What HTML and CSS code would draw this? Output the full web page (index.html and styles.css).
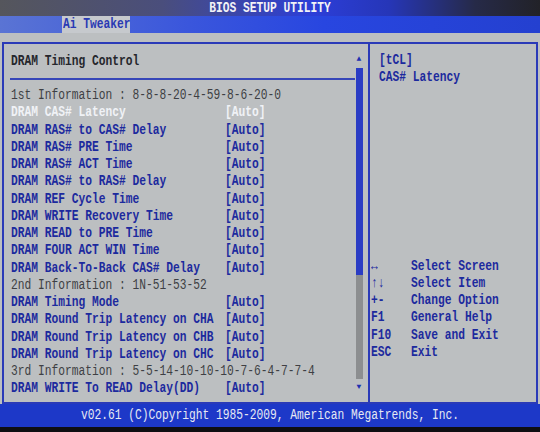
FILE: index.html
```html
<!DOCTYPE html>
<html lang="en">
<head>
    <meta charset="UTF-8">
    <title>BIOS Setup Utility</title>
    <link rel="stylesheet" href="styles.css">
</head>
<body>

    <div class="titlebar"><span class="txt">BIOS SETUP UTILITY</span></div>

    <div class="tabs">
        <div class="tab"><span class="txt">Ai Tweaker</span></div>
    </div>

    <div class="main">
        <div class="frame">
            <div class="left">
                <div class="content">
                    <div class="heading"><span class="txt">DRAM Timing Control</span></div>
                    <div class="rule"></div>

                    <div class="row info"><span class="txt">1st Information : 8-8-8-20-4-59-8-6-20-0</span></div>
                    <div class="row selected"><span class="txt label">DRAM CAS# Latency</span><span class="txt">[Auto]</span></div>
                    <div class="row"><span class="txt label">DRAM RAS# to CAS# Delay</span><span class="txt">[Auto]</span></div>
                    <div class="row"><span class="txt label">DRAM RAS# PRE Time</span><span class="txt">[Auto]</span></div>
                    <div class="row"><span class="txt label">DRAM RAS# ACT Time</span><span class="txt">[Auto]</span></div>
                    <div class="row"><span class="txt label">DRAM RAS# to RAS# Delay</span><span class="txt">[Auto]</span></div>
                    <div class="row"><span class="txt label">DRAM REF Cycle Time</span><span class="txt">[Auto]</span></div>
                    <div class="row"><span class="txt label">DRAM WRITE Recovery Time</span><span class="txt">[Auto]</span></div>
                    <div class="row"><span class="txt label">DRAM READ to PRE Time</span><span class="txt">[Auto]</span></div>
                    <div class="row"><span class="txt label">DRAM FOUR ACT WIN Time</span><span class="txt">[Auto]</span></div>
                    <div class="row"><span class="txt label">DRAM Back-To-Back CAS# Delay</span><span class="txt">[Auto]</span></div>
                    <div class="row info"><span class="txt">2nd Information : 1N-51-53-52</span></div>
                    <div class="row"><span class="txt label">DRAM Timing Mode</span><span class="txt">[Auto]</span></div>
                    <div class="row"><span class="txt label">DRAM Round Trip Latency on CHA</span><span class="txt">[Auto]</span></div>
                    <div class="row"><span class="txt label">DRAM Round Trip Latency on CHB</span><span class="txt">[Auto]</span></div>
                    <div class="row"><span class="txt label">DRAM Round Trip Latency on CHC</span><span class="txt">[Auto]</span></div>
                    <div class="row info"><span class="txt">3rd Information : 5-5-14-10-10-10-7-6-4-7-7-4</span></div>
                    <div class="row"><span class="txt label">DRAM WRITE To READ Delay(DD)</span><span class="txt">[Auto]</span></div>
                </div>

                <div class="scrollbar">
                    <div class="arrow">&#9650;</div>
                    <div class="thumb"></div>
                    <div class="track"></div>
                    <div class="arrow">&#9660;</div>
                </div>
            </div>

            <div class="right">
                <div class="help-top">
                    <div class="row"><span class="txt">[tCL]</span></div>
                    <div class="row"><span class="txt">CAS# Latency</span></div>
                </div>

                <div class="keys">
                    <div class="key"><span class="txt k">&#8596;</span><span class="txt">Select Screen</span></div>
                    <div class="key"><span class="txt k">&#8593;&#8595;</span><span class="txt">Select Item</span></div>
                    <div class="key"><span class="txt k">+-</span><span class="txt">Change Option</span></div>
                    <div class="key"><span class="txt k">F1</span><span class="txt">General Help</span></div>
                    <div class="key"><span class="txt k">F10</span><span class="txt">Save and Exit</span></div>
                    <div class="key"><span class="txt k">ESC</span><span class="txt">Exit</span></div>
                </div>
            </div>
        </div>
    </div>

    <div class="footer"><span class="txt">v02.61 (C)Copyright 1985-2009, American Megatrends, Inc.</span></div>

</body>
</html>
```

FILE: styles.css
```css
* {
    margin: 0;
    padding: 0;
    box-sizing: border-box;
}

body {
    width: 540px;
    height: 432px;
    overflow: hidden;
    background-color: #bcbfc1;
    color: #1c2a9e;
    font-family: "Liberation Mono", "DejaVu Sans Mono", monospace;
    font-weight: bold;
    font-size: 11.25px;
    line-height: 17.25px;
    white-space: nowrap;
}

/* bios font is taller than it is wide */
.txt {
    display: inline-block;
    transform: scaleY(1.25);
}

.titlebar {
    height: 16px;
    line-height: 16px;
    text-align: center;
    color: #f2f2f6;
    background: linear-gradient(90deg, #55565c 0%, #4a4e7c 30%, #2c3ed8 58%, #2636b8 72%, #262a48 88%, #222228 100%);
}

.tabs {
    height: 17px;
    padding-left: 62px;
    background: linear-gradient(90deg, #5a74d4 0%, #3a56dc 35%, #2846e0 60%, #2440d0 100%);
}

.tab {
    width: 68px;
    height: 17px;
    line-height: 17px;
    padding-left: 1px;
    background-color: #c6c9cd;
    color: #2a3ab4;
}

.main {
    height: 371px;
    padding: 9px 2px 0 2px;
}

.frame {
    height: 362px;
    border: 2px solid #2a3ab8;
    display: flex;
}

.left {
    width: 366px;
    display: flex;
    border-right: 2px solid #2a3ab8;
}

.content {
    flex: 1;
    padding: 9px 0 0 7px;
}

.heading {
    height: 17px;
    line-height: 17px;
    color: #25262c;
}

.rule {
    height: 2px;
    margin: 8px 0 7px -1px;
    background-color: #3646b8;
}

.row {
    display: flex;
    height: 17.25px;
}

.row .label {
    width: 214px;
}

.info {
    color: #3e3f44;
    font-weight: normal;
}

.selected {
    color: #f0f2f6;
}

.scrollbar {
    width: 8px;
    margin-right: 5px;
    padding-top: 11px;
    display: flex;
    flex-direction: column;
    align-items: center;
}

.arrow {
    font-size: 8px;
    line-height: 8px;
    height: 8px;
    color: #2030b0;
}

.thumb {
    width: 7px;
    height: 207px;
    margin-top: 5px;
    background-color: #2a3cc4;
}

.track {
    width: 7px;
    height: 104px;
    margin-bottom: 4px;
    background-color: #8c8e90;
}

.right {
    flex: 1;
    display: flex;
    flex-direction: column;
    padding-bottom: 41px;
}

.help-top {
    padding: 8px 0 0 9px;
}

.keys {
    margin-top: auto;
}

.key {
    display: flex;
    height: 17.25px;
}

.key .k {
    width: 41px;
    padding-left: 1px;
}

.footer {
    height: 28px;
    line-height: 23px;
    text-align: center;
    color: #e6e8f2;
    font-weight: normal;
    background-color: #1d38c8;
    border-bottom: 5px solid #0e0e12;
}
```
